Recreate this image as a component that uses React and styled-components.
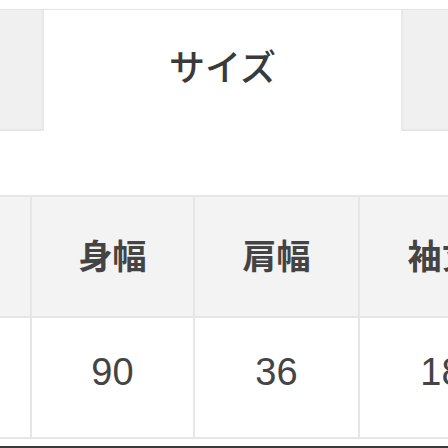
import React from 'react';
import styled, { createGlobalStyle } from 'styled-components';

const GlobalStyle = createGlobalStyle`
  html, body { margin: 0; padding: 0; background: #fff; }
  body { font-family: "Noto Sans CJK JP", sans-serif; }
`;

export const Page = styled.div`
  width: 448px;
  height: 448px;
  overflow: hidden;
  display: flex;
  flex-direction: column;
  background: #fff;
`;

export const TabBar = styled.div`
  margin-top: 9px;
  border-top: 1px solid #e4e4e4;
  display: grid;
  grid-template-columns: 44px 357px 1fr;
  height: 121px;
`;

export const Tab = styled.div`
  background: ${props => (props.active ? '#fff' : '#f0f0f0')};
  border-bottom: ${props => (props.active ? 'none' : '2px solid #e6e6e6')};
  border-left: ${props => (props.edge === 'right' ? '2px solid #e8e8e8' : 'none')};
  border-right: ${props => (props.edge === 'left' ? '2px solid #e8e8e8' : 'none')};
  display: flex;
  align-items: center;
  justify-content: center;
  padding-bottom: 12px;
  font-family: "Noto Sans CJK JP", sans-serif;
  font-weight: 500;
  font-size: 36px;
  color: #3a3a3a;
`;

export const Table = styled.div`
  margin-top: 64px;
  display: grid;
  grid-template-columns: 32px 163px 165px 165px;
  border-top: 2px solid #e6e6e6;
  border-bottom: 2px solid #e6e6e6;
`;

export const Cell = styled.div`
  height: ${props => (props.head ? '115px' : '109px')};
  background: ${props => (props.head ? '#f3f3f3' : '#fff')};
  border-right: 2px solid #e6e6e6;
  border-bottom: ${props => (props.head ? '2px solid #e6e6e6' : 'none')};
  display: flex;
  align-items: center;
  justify-content: center;
  white-space: nowrap;
  color: #444;
  font-size: ${props => (props.head ? '34px' : '38px')};
  font-family: ${props => (props.head ? '"Noto Sans CJK JP", sans-serif' : '"Liberation Sans", sans-serif')};
  font-weight: ${props => (props.head ? 700 : 400)};
  padding-bottom: ${props => (props.head ? '4px' : '10px')};
`;

export const BottomRule = styled.div`
  margin-top: auto;
  height: 2px;
  background: #3a3a3a;
`;

const heads = ['', '身幅', '肩幅', '袖丈'];
const values = ['', '90', '36', '18'];

export default function App() {
  return (
    <Page>
      <GlobalStyle />
      <TabBar>
        <Tab edge="left" />
        <Tab active>サイズ</Tab>
        <Tab edge="right" />
      </TabBar>
      <Table>
        {heads.map((h, i) => (
          <Cell head key={'h' + i}>{h}</Cell>
        ))}
        {values.map((v, i) => (
          <Cell key={'v' + i}>{v}</Cell>
        ))}
      </Table>
      <BottomRule />
    </Page>
  );
}
